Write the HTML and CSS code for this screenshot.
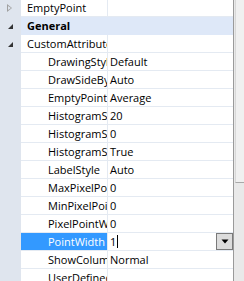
FILE: index.html
```html
<!DOCTYPE html>
<html>
<head>
<meta charset="utf-8">
<link rel="stylesheet" href="styles.css">
</head>
<body>
<div class="frame">
  <div class="grid">
    <div class="list">
      <div class="row">
        <div class="strip"><span class="exp-collapsed"></span></div>
        <div class="name lvl0">EmptyPoint</div>
        <div class="value"></div>
      </div>
      <div class="row cat">
        <div class="strip"><span class="exp-open"></span></div>
        <div class="catname">General</div>
      </div>
      <div class="row">
        <div class="strip"><span class="exp-open"></span></div>
        <div class="name lvl0">CustomAttributes</div>
        <div class="value"></div>
      </div>
      <div class="row"><div class="strip"></div><div class="name lvl1">DrawingStyle</div><div class="value">Default</div></div>
      <div class="row"><div class="strip"></div><div class="name lvl1">DrawSideBySide</div><div class="value">Auto</div></div>
      <div class="row"><div class="strip"></div><div class="name lvl1">EmptyPointValue</div><div class="value">Average</div></div>
      <div class="row"><div class="strip"></div><div class="name lvl1">HistogramSegmentIntervalNumber</div><div class="value">20</div></div>
      <div class="row"><div class="strip"></div><div class="name lvl1">HistogramSegmentIntervalWidth</div><div class="value">0</div></div>
      <div class="row"><div class="strip"></div><div class="name lvl1">HistogramShowPercentOnSecondaryYAxis</div><div class="value">True</div></div>
      <div class="row"><div class="strip"></div><div class="name lvl1">LabelStyle</div><div class="value">Auto</div></div>
      <div class="row"><div class="strip"></div><div class="name lvl1">MaxPixelPointWidth</div><div class="value">0</div></div>
      <div class="row"><div class="strip"></div><div class="name lvl1">MinPixelPointWidth</div><div class="value">0</div></div>
      <div class="row"><div class="strip"></div><div class="name lvl1">PixelPointWidth</div><div class="value">0</div></div>
      <div class="row selected">
        <div class="strip"></div>
        <div class="name lvl1">PointWidth</div>
        <div class="value edit"><span class="edittext">1</span><span class="caret"></span><span class="dropbtn"><svg width="8" height="5" viewBox="0 0 8 5"><path d="M0.5 0.5h7L4 4.5z" fill="#000"/></svg></span></div>
      </div>
      <div class="row"><div class="strip"></div><div class="name lvl1">ShowColumnPoint</div><div class="value">Normal</div></div>
      <div class="row"><div class="strip"></div><div class="name lvl1">UserDefinedProperty</div><div class="value"></div></div>
    </div>
  </div>
  <div class="scrollbar">
    <div class="thumb"></div>
  </div>
</div>
</body>
</html>
```
FILE: styles.css
```css
html, body {
  margin: 0;
  padding: 0;
  background: #ffffff;
}
body {
  width: 244px;
  height: 281px;
  overflow: hidden;
  font-family: "Open Sans", "Noto Sans", sans-serif;
  font-size: 11px;
  color: #000;
}
.frame {
  display: flex;
  width: 244px;
  height: 281px;
}
.grid {
  width: 233px;
  height: 281px;
  overflow: hidden;
}
.list {
  margin-top: -1px;
}
.row {
  display: flex;
  height: 17px;
  border-bottom: 1px solid #e4eaf2;
  line-height: 17px;
}
.strip {
  width: 21px;
  flex: none;
  background: #dfe5ee;
  position: relative;
  border-bottom: 1px solid #dfe5ee;
  margin-bottom: -1px;
}
.name {
  width: 86px;
  flex: none;
  overflow: hidden;
  white-space: nowrap;
  border-right: 1px solid #e4eaf2;
  box-sizing: border-box;
  width: 87px;
}
.lvl0 { padding-left: 6px; }
.lvl1 { padding-left: 27px; }
.value {
  flex: 1;
  padding-left: 2px;
  white-space: nowrap;
  overflow: hidden;
  position: relative;
}
.cat {
  background: #dee8f8;
  border-bottom-color: #dee8f8;
}
.catname {
  padding-left: 6px;
  font-weight: bold;
}
.exp-collapsed {
  position: absolute;
  left: 7px;
  top: 5px;
  width: 0;
  height: 0;
  border-left: 5px solid #a0a0a0;
  border-top: 4px solid transparent;
  border-bottom: 4px solid transparent;
}
.exp-collapsed::after {
  content: "";
  position: absolute;
  left: -4px;
  top: -2px;
  border-left: 3px solid #dfe5ee;
  border-top: 2px solid transparent;
  border-bottom: 2px solid transparent;
}
.exp-open {
  position: absolute;
  left: 8px;
  top: 7px;
  width: 0;
  height: 0;
  border-right: 5px solid #333;
  border-top: 5px solid transparent;
}
.selected .name {
  background: #3399ff;
  color: #fff;
}
.edit {
  display: flex;
  align-items: center;
}
.edittext {
  line-height: 17px;
}
.caret {
  display: inline-block;
  width: 1px;
  height: 13px;
  background: #000;
  margin-left: 1px;
}
.dropbtn {
  position: absolute;
  right: 0;
  top: 0;
  width: 15px;
  height: 15px;
  border: 1px solid #7a7a7a;
  background: #dcdcdc;
  display: flex;
  align-items: center;
  justify-content: center;
}
.scrollbar {
  width: 11px;
  flex: none;
  border-left: 1px solid #9a9a9a;
  background: #e9e9e9;
  box-sizing: border-box;
  position: relative;
}
.thumb {
  height: 183px;
  margin-left: 1px;
  background: #f0f0f0;
  border-bottom: 1px solid #a8a8a8;
  border-left: 1px solid #d8d8d8;
  box-sizing: border-box;
}
```
